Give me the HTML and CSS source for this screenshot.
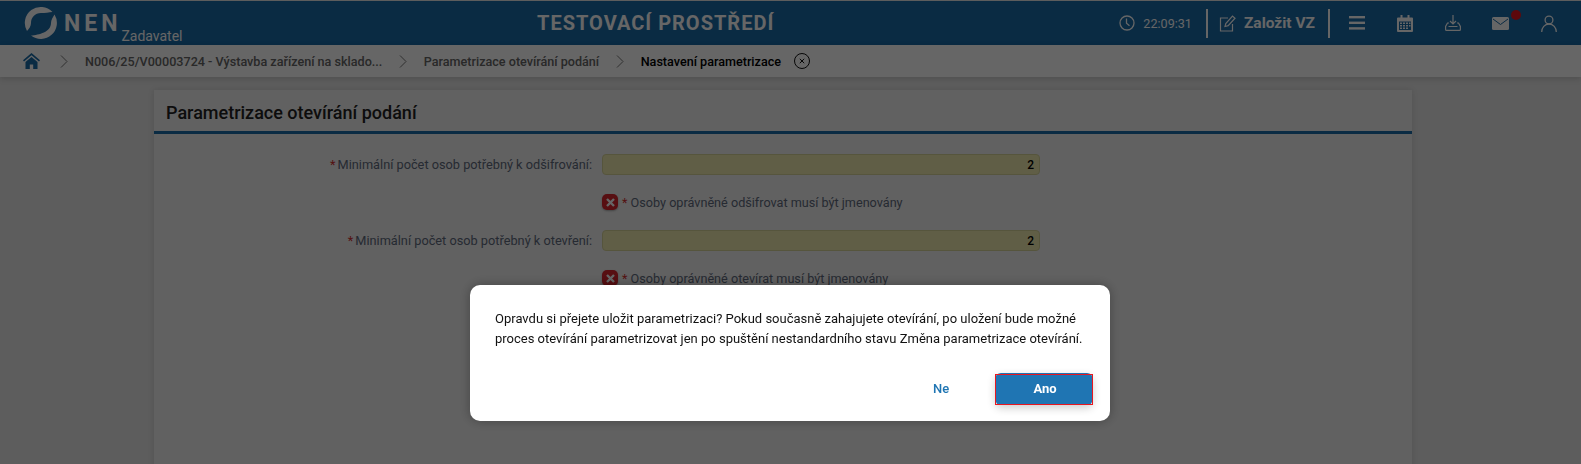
FILE: index.html
```html
<!DOCTYPE html>
<html lang="cs">
<head>
  <meta charset="UTF-8">
  <meta name="viewport" content="width=device-width, initial-scale=1.0">
  <title>NEN - Parametrizace otevírání podání</title>
  <link rel="stylesheet" href="styles.css">
</head>
<body>
  <header class="topbar">
    <div class="logo">
      <svg class="logo-mark" width="34" height="34" viewBox="0 0 34 34" fill="#fff">
        <path d="M3 25A16 16 0 0 1 28.500 6C25 6.500 21 7 17 7C11 7 7 11.500 7 17C7 20 5 23 3 25z"/>
        <path d="M30.500 8.500A16 16 0 0 1 7 29.500C15 29 27 26 27 17C27 14 29 11 30.500 8.500z"/>
      </svg>
      <span class="logo-name">NEN</span>
      <span class="logo-role">Zadavatel</span>
    </div>
    <div class="env-title">TESTOVACÍ PROSTŘEDÍ</div>
    <div class="tools">
      <svg class="clock" width="16" height="16" viewBox="0 0 16 16" fill="none" stroke="#fff" stroke-width="1.300"><circle cx="8" cy="8" r="7"/><path d="M7.500 3.500v4.800l3 2.500"/></svg>
      <span class="time">22:09:31</span>
      <span class="divider"></span>
      <svg class="edit" width="17" height="17" viewBox="0 0 17 17" fill="none" stroke="#fff" stroke-width="1.200"><path d="M9 3H1.500v13h12V9"/><path d="M6 11.500l.8-3L13.500 1l2.500 2.200-6.800 7.400z"/></svg>
      <span class="create">Založit VZ</span>
      <span class="divider"></span>
      <svg class="tool-icon" width="16" height="14" viewBox="0 0 16 14" fill="#fff"><rect y="0" width="16" height="2.400"/><rect y="5.600" width="16" height="2.400"/><rect y="11.200" width="16" height="2.400"/></svg>
      <svg class="tool-icon" width="16" height="17" viewBox="0 0 16 17"><path d="M1 2.500h2.500V0h2v2.500h5V0h2v2.500H15a1 1 0 0 1 1 1V16a1 1 0 0 1-1 1H1a1 1 0 0 1-1-1V3.500a1 1 0 0 1 1-1z" fill="#fff"/><path d="M2 6.500h12V15H2z" fill="#196ba8"/><path d="M3 7.500h2v1.500H3zM6 7.500h2v1.500H6zM9 7.500h2v1.500H9zM12 7.500h1.500v1.500H12zM3 10h2v1.500H3zM6 10h2v1.500H6zM9 10h2v1.500H9zM12 10h1.500v1.500H12zM3 12.500h2V14H3zM6 12.500h2V14H6zM9 12.500h2V14H9z" fill="#fff"/></svg>
      <svg class="tool-icon" width="16" height="16" viewBox="0 0 16 16" fill="none" stroke="#fff" stroke-width="1.200"><path d="M8 0v8.500M5 6l3 3 3-3M3.500 11.500h9"/><path d="M4 8H2.500L.6 11.500v3c0 .5.400.9.900.9h13c.5 0 .9-.4.9-.9v-3L13.500 8H12"/></svg>
      <span class="mail">
        <svg width="17" height="13" viewBox="0 0 17 13"><rect width="17" height="13" rx="1.500" fill="#fff"/><path d="M1 2l7.500 5.500L16 2" fill="none" stroke="#196ba8" stroke-width="1"/></svg>
        <span class="mail-dot"></span>
      </span>
      <svg class="tool-icon" width="16" height="17" viewBox="0 0 16 17" fill="none" stroke="#fff" stroke-width="1.300"><circle cx="8" cy="5" r="3.900"/><path d="M.7 17c0-4.500 3-8 7.300-8s7.300 3.500 7.300 8"/></svg>
    </div>
  </header>

  <nav class="breadcrumb">
    <svg class="home" width="17" height="16" viewBox="0 0 17 16" fill="#196ba8"><path d="M8.500 0L0 7.200l1 1.200L8.500 2.200 16 8.400l1-1.200z"/><path d="M8.500 4L2.500 9v7h4.300v-4.500h3.400V16h4.300V9z"/></svg>
    <svg class="chevron" width="8" height="13" viewBox="0 0 8 13" fill="none" stroke="#777" stroke-width="1"><path d="M1 .5l6 6-6 6"/></svg>
    <a class="crumb">N006/25/V00003724 - Výstavba zařízení na sklado...</a>
    <svg class="chevron" width="8" height="13" viewBox="0 0 8 13" fill="none" stroke="#777" stroke-width="1"><path d="M1 .5l6 6-6 6"/></svg>
    <a class="crumb">Parametrizace otevírání podání</a>
    <svg class="chevron" width="8" height="13" viewBox="0 0 8 13" fill="none" stroke="#777" stroke-width="1"><path d="M1 .5l6 6-6 6"/></svg>
    <span class="crumb current">Nastavení parametrizace</span>
    <svg class="crumb-close" width="16" height="16" viewBox="0 0 16 16" fill="none" stroke="#111" stroke-width="1"><circle cx="8" cy="8" r="7.500"/><path d="M5.800 5.800l4.400 4.400M10.200 5.800l-4.400 4.400"/></svg>
  </nav>

  <main class="content">
    <section class="panel">
      <h1 class="panel-title">Parametrizace otevírání podání</h1>
      <div class="form">
        <label class="field-label"><span class="req">*</span>Minimální počet osob potřebný k odšifrování:</label>
        <div class="num-input">2</div>
        <div></div>
        <div class="check-row">
          <span class="check"><svg width="9" height="9" viewBox="0 0 9 9" stroke="#fff" stroke-width="2.400"><path d="M1 1l7 7M8 1L1 8"/></svg></span>
          <span><span class="req">*</span> Osoby oprávněné odšifrovat musí být jmenovány</span>
        </div>
        <label class="field-label"><span class="req">*</span>Minimální počet osob potřebný k otevření:</label>
        <div class="num-input">2</div>
        <div></div>
        <div class="check-row">
          <span class="check"><svg width="9" height="9" viewBox="0 0 9 9" stroke="#fff" stroke-width="2.400"><path d="M1 1l7 7M8 1L1 8"/></svg></span>
          <span><span class="req">*</span> Osoby oprávněné otevírat musí být jmenovány</span>
        </div>
      </div>
    </section>
  </main>

  <div class="overlay"></div>

  <div class="dialog">
    <p class="dialog-text">Opravdu si přejete uložit parametrizaci? Pokud současně zahajujete otevírání, po uložení bude možné proces otevírání parametrizovat jen po spuštění nestandardního stavu Změna parametrizace otevírání.</p>
    <div class="dialog-actions">
      <button class="btn-link">Ne</button>
      <button class="btn-primary">Ano</button>
    </div>
  </div>
</body>
</html>
```

FILE: styles.css
```css
html, body {
  height: 100%;
}

body {
  margin: 0;
  padding-top: 1px;
  box-sizing: border-box;
  height: 464px;
  overflow: hidden;
  font-family: Roboto, "Liberation Sans", sans-serif;
  background-color: #e8e8e8;
  color: #333;
}

/* horni lista */
.topbar {
  display: flex;
  align-items: center;
  height: 44px;
  background-color: #196ba8;
  color: #fff;
}

.logo {
  display: flex;
  align-items: flex-start;
  width: 520px;
  height: 44px;
  padding-left: 24px;
  box-sizing: border-box;
  flex: none;
}

.logo-mark {
  margin-top: 5px;
}

.logo-name {
  margin: 9px 0 0 6px;
  font-size: 23px;
  line-height: 27px;
  font-weight: 700;
  letter-spacing: 4px;
}

.logo-role {
  margin: 27px 0 0 0;
  font-size: 14px;
  line-height: 17px;
}

.env-title {
  margin-left: 17px;
  font-size: 20px;
  font-weight: 700;
  letter-spacing: 1px;
  flex: none;
  white-space: nowrap;
}

.tools {
  display: flex;
  align-items: center;
  margin-left: auto;
  padding-right: 24px;
}

.clock {
  margin-right: 8px;
}

.time {
  font-size: 12.600px;
  margin-right: 14px;
}

.divider {
  width: 2px;
  height: 29px;
  background-color: #fff;
}

.edit {
  margin: 0 8px 0 11px;
}

.create {
  font-size: 15.500px;
  font-weight: 700;
  margin-right: 13px;
}

.tool-icon {
  margin-left: 32px;
}

.tools .divider + .tool-icon {
  margin-left: 19px;
}

.mail {
  position: relative;
  display: flex;
  margin-left: 31px;
}

.mail-dot {
  position: absolute;
  top: -7px;
  right: -12px;
  width: 10px;
  height: 10px;
  border-radius: 50%;
  background-color: #e8161f;
}

.mail + .tool-icon {
  margin-left: 32px;
}

/* drobeckova navigace */
.breadcrumb {
  display: flex;
  align-items: center;
  height: 32px;
  padding-left: 23px;
  background-color: #fff;
  box-shadow: 0 2px 6px rgba(0, 0, 0, 0.15);
  font-size: 12.600px;
  font-weight: 500;
  position: relative;
}

.home {
  margin-right: 20px;
}

.chevron {
  margin-right: 17px;
}

.crumb {
  color: #666;
  margin-right: 16.500px;
}

.crumb.current {
  color: #000;
  margin-right: 13px;
}

/* obsah */
.content {
  padding: 13px 169px 0 154px;
}

.panel {
  background-color: #f2f2f2;
  height: 400px;
  box-shadow: 0 0 6px rgba(0, 0, 0, 0.12);
}

.panel-title {
  margin: 0;
  height: 41px;
  padding: 0 12px;
  font-size: 18px;
  font-weight: 500;
  line-height: 46px;
  color: #222;
  border-bottom: 3px solid #196ba8;
}

.form {
  display: grid;
  grid-template-columns: 438px 438px;
  column-gap: 10px;
  grid-auto-rows: min-content;
  padding-top: 20px;
}

.field-label {
  text-align: right;
  font-size: 12.750px;
  line-height: 21px;
  color: #5f6a7d;
}

.req {
  color: #d32f2f;
  margin-right: 2px;
}

.num-input {
  height: 21px;
  box-sizing: border-box;
  padding-right: 5px;
  text-align: right;
  font-size: 12px;
  line-height: 20px;
  color: #000;
  font-weight: 500;
  background-color: #f0ecb0;
  border: 1px solid #d8d49a;
  border-radius: 4px;
  margin-bottom: 19px;
}

.check-row {
  display: flex;
  align-items: center;
  gap: 4px;
  height: 16px;
  margin-bottom: 20px;
  font-size: 12.650px;
  color: #5f6a7d;
}

.check-row .req {
  margin-right: 0;
}

.check {
  display: flex;
  align-items: center;
  justify-content: center;
  width: 16px;
  height: 16px;
  border-radius: 5px;
  background-color: #d9262e;
  box-shadow: 0 1px 2px rgba(0, 0, 0, 0.3);
}

/* prekryti a dialog */
.overlay {
  position: fixed;
  top: 0;
  left: 0;
  width: 100%;
  height: 100%;
  background-color: rgba(0, 0, 0, 0.6);
}

.dialog {
  position: fixed;
  left: 470px;
  top: 285px;
  width: 640px;
  height: 136px;
  box-sizing: border-box;
  padding: 24px 17px 0 25px;
  background-color: #fff;
  border-radius: 10px;
  box-shadow: 0 0 12px rgba(0, 0, 0, 0.3);
  color: #111;
}

.dialog-text {
  margin: 0;
  font-size: 13px;
  line-height: 20px;
}

.dialog-actions {
  display: flex;
  justify-content: flex-end;
  align-items: center;
  gap: 6px;
  margin-top: 24px;
}

.btn-link {
  width: 98px;
  height: 32px;
  padding: 0 0 2px 2px;
  border: none;
  background: none;
  font-family: inherit;
  font-size: 13px;
  font-weight: 500;
  color: #1f75b3;
}

.btn-primary {
  position: relative;
  width: 98px;
  height: 32px;
  padding: 0 0 2px 2px;
  border: none;
  border-radius: 6px;
  background-color: #1f75b3;
  font-family: inherit;
  font-size: 13px;
  font-weight: 700;
  color: #fff;
  box-shadow: 0 3px 8px rgba(0, 0, 0, 0.2);
}

/* cerveny ramecek aktivniho tlacitka */
.btn-primary::after {
  content: "";
  position: absolute;
  top: 1px;
  left: 0;
  right: 0;
  bottom: 0;
  border: 1px solid #e8161f;
}
```
